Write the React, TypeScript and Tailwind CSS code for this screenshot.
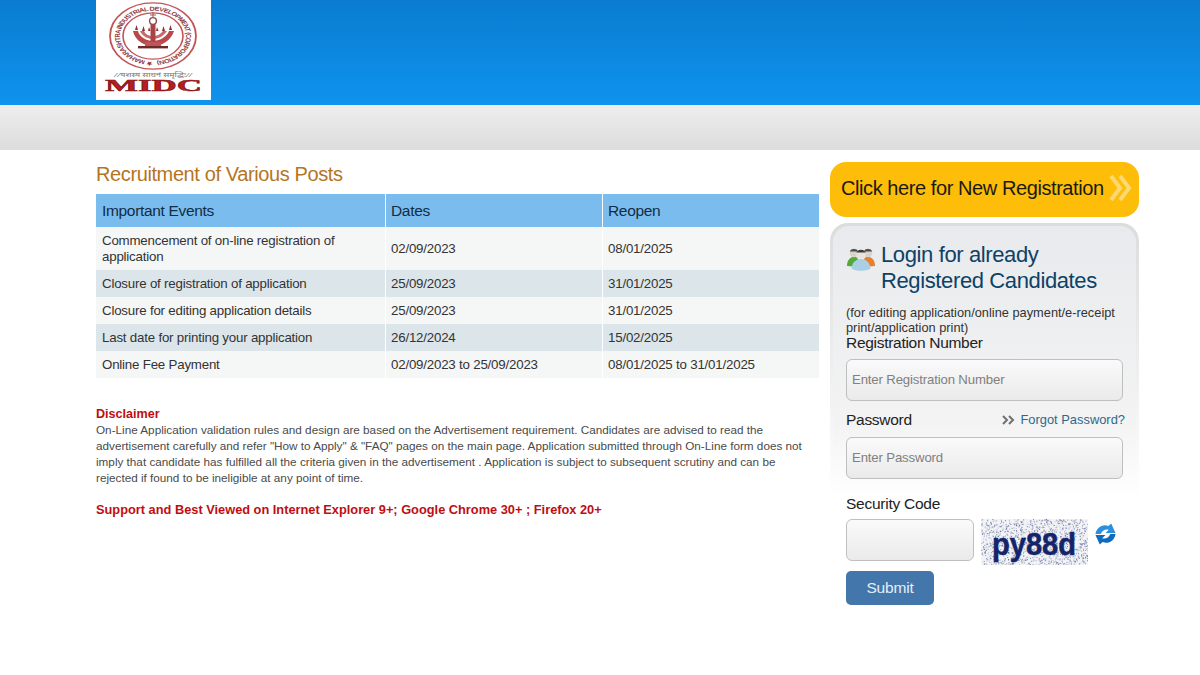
const EVENTS = [
  { name: 'Commencement of on-line registration of application', dates: '02/09/2023', reopen: '08/01/2025', h: 'h-[43px]', bg: 'bg-[#f5f6f6]' },
  { name: 'Closure of registration of application', dates: '25/09/2023', reopen: '31/01/2025', h: 'h-[27px]', bg: 'bg-[#dce6ea]' },
  { name: 'Closure for editing application details', dates: '25/09/2023', reopen: '31/01/2025', h: 'h-[27px]', bg: 'bg-[#f5f6f6]' },
  { name: 'Last date for printing your application', dates: '26/12/2024', reopen: '15/02/2025', h: 'h-[27px]', bg: 'bg-[#dce6ea]' },
  { name: 'Online Fee Payment', dates: '02/09/2023 to 25/09/2023', reopen: '08/01/2025 to 31/01/2025', h: 'h-[27px]', bg: 'bg-[#f5f6f6]' },
];

// fixed pseudo random speckle for the captcha
function makeSpeckle() {
  let seed = 12345;
  const next = () => {
    seed = (seed * 1103515245 + 12345) % 2147483648;
    return seed / 2147483648;
  };
  return Array.from({ length: 1300 }, () => ({ x: next() * 107, y: next() * 46, o: 0.15 + next() * 0.7 }));
}
const SPECKLE = makeSpeckle();

function Logo() {
  return (
    <svg viewBox="0 0 115 100" className="w-[115px] h-[100px] bg-white block">
      <g transform="translate(57 36) scale(1 0.77)">
        <circle r="43" fill="none" stroke="#c25456" strokeWidth="1.8" />
        <circle r="30" fill="none" stroke="#c25456" strokeWidth="1.6" />
        <path id="ringText" d="M 0 33 A 33 33 0 1 1 0.1 33" fill="none" />
        <text fontSize="7.4" fontWeight="700" fill="#8f3a3c" fontFamily="Liberation Sans, sans-serif">
          <textPath href="#ringText" textLength="203">★ MAHARASHTRA INDUSTRIAL DEVELOPMENT (CORPORATION)</textPath>
        </text>
      </g>
      {/* lamp emblem */}
      <path d="M37 31 C39 41 49 46 57 46 C65 46 75 41 78 31 L73 31 C71 37 63 41 57 41 C51 41 43 37 42 31 Z" fill="#b8484a" />
      <path d="M44 31 C46 36 52 39 57 39 C62 39 68 36 71 31 L67 31 C65 34 61 36 57 36 C53 36 49 34 48 31 Z" fill="#c9686a" />
      <path d="M39 30 L40.5 25 L42 30 Z M46 31 L47.5 26 L49 31 Z M52 31 L53 27 L54.5 31 Z M60 31 L61 27 L62.5 31 Z M66 31 L67.5 26 L69 31 Z M73 30 L74.5 25 L76 30 Z" fill="#8c2f31" />
      <circle cx="57" cy="21" r="3.4" fill="none" stroke="#8f4a4c" strokeWidth="1.4" />
      <path d="M57 12 V18 M54 15 H60" stroke="#a86062" strokeWidth="1.2" />
      <rect x="54.5" y="24" width="5" height="18" fill="#a94446" />
      <rect x="42" y="46" width="30" height="2.4" fill="#6d2a2b" />
      <rect x="49" y="42" width="16" height="4" fill="#c25456" />
      <text x="57" y="76.5" textAnchor="middle" fontSize="6" fill="#777777" fontFamily="Noto Sans, sans-serif" fontStyle="italic" textLength="78" lengthAdjust="spacingAndGlyphs">//यशस्य साधनं समृद्धिः//</text>
      <text x="57.5" y="91" textAnchor="middle" fontSize="16" fontWeight="700" fill="#b51e22" stroke="#7d1114" strokeWidth="0.5" fontFamily="Liberation Serif, serif" textLength="97" lengthAdjust="spacingAndGlyphs">MIDC</text>
    </svg>
  );
}

function Captcha() {
  return (
    <svg viewBox="0 0 107 46" className="w-[107px] h-[46px] block bg-[#f2f3f6] shrink-0">
      {SPECKLE.map((d, i) => (
        <rect key={i} x={d.x} y={d.y} width="1" height="1" fill="#4e5a8c" opacity={d.o} />
      ))}
      <text x="53" y="36" textAnchor="middle" fontSize="32" fontWeight="700" fill="#14246b" stroke="#14246b" strokeWidth="0.5" fontFamily="Liberation Sans, sans-serif" textLength="84" lengthAdjust="spacingAndGlyphs">py88d</text>
    </svg>
  );
}

function RefreshIcon() {
  const arrow = 'M0.5 11 C1.5 4 8 0 14 2.5 L17 0 L21.5 10 L11 10 L14.5 6.5 C11 5.5 7.5 7 6 11 Z';
  return (
    <svg viewBox="0 0 22 22" className="w-[21px] h-[22px] mt-[4px] shrink-0">
      <path d={arrow} fill="#2a8fdc" />
      <path d={arrow} fill="#0f6bbf" transform="rotate(180 11 11)" />
    </svg>
  );
}

function PeopleIcon() {
  return (
    <svg viewBox="0 0 30 28" className="w-[28px] h-[27px] shrink-0">
      <path d="M0 22 C0 15 4 12 8 12 C12 12 13 17 13 23 Z" fill="#55a83a" />
      <path d="M17 23 C17 17 18 12 22 12 C26 12 30 15 30 22 Z" fill="#e97f2e" />
      <circle cx="7.5" cy="8" r="4.6" fill="#d9d4cb" />
      <circle cx="22.5" cy="8" r="4.6" fill="#d9d4cb" />
      <path d="M3 6.5 C4 3 11 3 12 6.5 Z M18 6.5 C19 3 26 3 27 6.5 Z" fill="#4a4a4c" />
      <circle cx="15" cy="9" r="5" fill="#e9e3dc" />
      <path d="M10 7.5 C11 3.5 19 3.5 20 7.5 Z" fill="#3b3b3d" />
      <path d="M5 25 C5 18 10 14.5 15 14.5 C20 14.5 25 18 25 25 C20 28 10 28 5 25 Z" fill="#a9cfe4" />
    </svg>
  );
}

function Field({ placeholder }: { placeholder: string }) {
  return (
    <div className="flex items-center h-[42px] w-[277px] px-[5px] rounded-[6px] border border-[#bfbfbf] bg-gradient-to-b from-[#fafafa] to-[#eaeaea] text-[13.2px] tracking-[-0.15px] text-[#808080]">
      {placeholder}
    </div>
  );
}

export default function App() {
  return (
    <div className="w-[1200px] h-[675px] overflow-hidden bg-white font-['Liberation_Sans',Arial,sans-serif]">
      <header className="h-[105px] pl-[96px] bg-gradient-to-b from-[#0a7cd0] to-[#0f93ee]">
        <Logo />
      </header>
      <div className="h-[45px] bg-gradient-to-b from-[#eeeeee] to-[#dcdcdc]" />

      <div className="flex pl-[96px] gap-[11px]">
        <main className="w-[723px] pt-[12px]">
          <h1 className="text-[20px] leading-[25px] tracking-[-0.39px] text-[#b5751e]">Recruitment of Various Posts</h1>
          <div className="mt-[7px] flex flex-col">
            <div className="grid grid-cols-[289px_216px_216px] gap-x-px h-[33px] items-center text-[15.5px] tracking-[-0.33px] text-[#122c44]">
              <div className="h-full flex items-center px-[6px] bg-[#7abcee]">Important Events</div>
              <div className="h-full flex items-center px-[5px] bg-[#7abcee]">Dates</div>
              <div className="h-full flex items-center px-[5px] bg-[#7abcee]">Reopen</div>
            </div>
            {EVENTS.map((row) => (
              <div key={row.name} className={`grid grid-cols-[289px_216px_216px] gap-x-px text-[13.3px] tracking-[-0.2px] leading-[16px] text-[#333333] ${row.h}`}>
                <div className={`flex items-center px-[6px] ${row.bg}`}>{row.name}</div>
                <div className={`flex items-center px-[5px] ${row.bg}`}>{row.dates}</div>
                <div className={`flex items-center px-[5px] ${row.bg}`}>{row.reopen}</div>
              </div>
            ))}
          </div>

          <h2 className="mt-[28px] text-[12.6px] leading-[16px] font-bold text-[#c00d12]">Disclaimer</h2>
          <p className="text-[11.72px] leading-[16px] text-[#4a4a4a]">
            On-Line Application validation rules and design are based on the Advertisement requirement. Candidates are advised to read the advertisement carefully and refer "How to Apply" &amp; "FAQ" pages on the main page. Application submitted through On-Line form does not imply that candidate has fulfilled all the criteria given in the advertisement . Application is subject to subsequent scrutiny and can be rejected if found to be ineligible at any point of time.
          </p>
          <p className="mt-[16px] text-[12.8px] leading-[16px] font-bold text-[#c00d12]">
            Support and Best Viewed on Internet Explorer 9+; Google Chrome 30+ ; Firefox 20+
          </p>
        </main>

        <aside className="w-[309px] pt-[12px]">
          <button className="flex items-center w-[309px] h-[55px] pl-[11px] pb-[3px] rounded-[16px] bg-[#fdbd09] text-[20px] tracking-[-0.42px] text-[#1c1a10] whitespace-nowrap">
            Click here for New Registration
            <svg viewBox="0 0 24 28" className="w-[24px] h-[28px] ml-[5px] shrink-0" fill="none" stroke="#fed973" strokeWidth="4">
              <path d="M2 2 L11 14 L2 26" />
              <path d="M11 2 L20 14 L11 26" />
            </svg>
          </button>

          <div className="mt-[6px] w-[309px] px-[3px] pt-[3px] rounded-t-[18px] bg-gradient-to-b from-[#dcdcdc] to-white to-70%">
            <div className="h-[389px] pl-[13px] pr-[10px] pt-[16px] rounded-t-[16px] bg-gradient-to-b from-[#e8eaed] via-[#f3f3f3] via-50% to-white to-70%">
              <div className="flex gap-[6px]">
                <div className="ml-px pt-[3px]"><PeopleIcon /></div>
                <h2 className="text-[22px] leading-[26px] tracking-[-0.38px] text-[#0d4266] whitespace-nowrap">Login for already<br />Registered Candidates</h2>
              </div>
              <p className="mt-[11px] text-[12.8px] leading-[15px] text-[#333333]">(for editing application/online payment/e-receipt print/application print)</p>
              <label className="block -mt-px text-[15.5px] tracking-[-0.29px] leading-[18px] text-[#222222]">Registration Number</label>
              <div className="mt-[7px]"><Field placeholder="Enter Registration Number" /></div>
              <div className="mt-[10px] flex items-center justify-between h-[18px] w-[279px]">
                <label className="text-[15.5px] tracking-[-0.29px] text-[#222222]">Password</label>
                <span className="flex items-center gap-[5px] text-[12.9px] text-[#2c6a8c]">
                  <svg viewBox="0 0 13 10" className="w-[13px] h-[10px]" fill="none" stroke="#707070" strokeWidth="2">
                    <path d="M1 1 L5 5 L1 9 M7 1 L11 5 L7 9" />
                  </svg>
                  Forgot Password?
                </span>
              </div>
              <div className="mt-[8px]"><Field placeholder="Enter Password" /></div>
              <label className="block mt-[15px] text-[15.5px] tracking-[-0.25px] leading-[20px] text-[#222222]">Security Code</label>
              <div className="mt-[5px] flex items-start gap-[7px]">
                <div className="h-[42px] w-[128px] rounded-[6px] border border-[#bfbfbf] bg-gradient-to-b from-[#fafafa] to-[#eaeaea]" />
                <Captcha />
                <RefreshIcon />
              </div>
              <button className="block mt-[6px] w-[88px] h-[34px] rounded-[5px] bg-[#4377ab] text-[15.5px] tracking-[-0.2px] text-[#e6eef6]">Submit</button>
            </div>
          </div>
        </aside>
      </div>
    </div>
  );
}
